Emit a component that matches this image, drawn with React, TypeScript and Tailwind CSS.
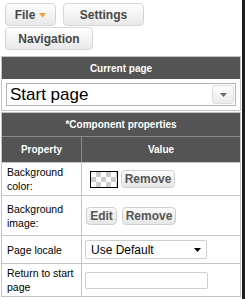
import React from "react";

const font = "font-['Liberation_Sans',Arial,sans-serif]";

function ToolButton({ children, className = "" }: { children: React.ReactNode; className?: string }) {
  return (
    <div
      className={`flex h-[23px] items-center justify-center rounded-[4px] border border-[#d6d6d6] bg-gradient-to-b from-[#ffffff] to-[#e8e8e8] text-[12px] font-bold text-[#474747] ${className}`}
    >
      {children}
    </div>
  );
}

function SmallButton({ children, className = "" }: { children: React.ReactNode; className?: string }) {
  return (
    <div
      className={`flex h-[18px] items-center justify-center rounded-[4px] border border-[#d0d0d0] bg-gradient-to-b from-[#fbfbfb] to-[#e6e6e6] text-[12px] font-bold text-[#555555] ${className}`}
    >
      {children}
    </div>
  );
}

export default function App() {
  return (
    <div className={`flex h-[299px] w-[245px] overflow-hidden bg-white ${font}`}>
      <div className="flex w-[242px] flex-col">
        {/* Toolbar */}
        <div className="flex w-[150px] flex-wrap gap-x-[7px] gap-y-px pl-[5px] pt-[3px]">
          <ToolButton className="w-[51px] gap-[4px]">
            <span>File</span>
            <svg width="7" height="5" viewBox="0 0 7 5" className="mt-px">
              <path d="M0 0 L7 0 L3.5 4.5 Z" fill="#f0a030" />
            </svg>
          </ToolButton>
          <ToolButton className="w-[81px]">Settings</ToolButton>
          <ToolButton className="w-[88px]">Navigation</ToolButton>
        </div>

        {/* Current page table */}
        <div className="mx-px mt-[6px] border border-[#c4c4c4]">
          <div className="flex h-[22px] items-center justify-center bg-[#545454] text-[10px] font-bold text-white">
            Current page
          </div>
          <div className="flex h-[31px] items-center px-[4px]">
            <div className="flex h-[23px] w-full items-center border border-[#b4b4b4] bg-white pl-[3px] pr-px">
              <span className="flex-1 text-[17px] leading-none text-black">Start page</span>
              <div className="flex h-[19px] w-[22px] items-center justify-center rounded-[3px] border border-[#dcdcdc] bg-gradient-to-b from-[#fdfdfd] to-[#ececec]">
                <svg width="7" height="4" viewBox="0 0 7 4">
                  <path d="M0 0 L7 0 L3.5 4 Z" fill="#6a6a6a" />
                </svg>
              </div>
            </div>
          </div>
        </div>

        {/* Component properties table */}
        <div className="mx-px mt-px border border-[#c4c4c4]">
          <div className="flex h-[24px] items-center justify-center border-b border-[#8a8a8a] bg-[#545454] text-[10px] font-bold text-white">
            *Component properties
          </div>
          <div className="grid h-[25px] grid-cols-[80px_1fr] bg-[#545454] text-[10px] font-bold text-white">
            <div className="flex items-center justify-center border-r border-[#8a8a8a]">Property</div>
            <div className="flex items-center justify-center">Value</div>
          </div>

          <div className="grid grid-cols-[80px_1fr] text-[10.5px] leading-[14px] text-black">
            {/* Background color */}
            <div className="flex h-[33px] items-center border-r border-t border-[#c4c4c4] px-[5px]">
              Background color:
            </div>
            <div className="flex h-[33px] items-center gap-[3px] border-t border-[#c4c4c4] pl-[8px]">
              <div className="h-[17px] w-[28px] border border-black bg-[repeating-conic-gradient(#cccccc_0%_25%,#ffffff_0%_50%)] bg-[length:10px_10px]" />
              <SmallButton className="w-[54px]">Remove</SmallButton>
            </div>

            {/* Background image */}
            <div className="flex h-[40px] items-center border-r border-t border-[#c4c4c4] px-[5px]">
              Background image:
            </div>
            <div className="flex h-[40px] items-center gap-[5px] border-t border-[#c4c4c4] pl-[4px]">
              <SmallButton className="w-[31px]">Edit</SmallButton>
              <SmallButton className="w-[54px]">Remove</SmallButton>
            </div>

            {/* Page locale */}
            <div className="flex h-[28px] items-center border-r border-t border-[#c4c4c4] px-[5px]">
              Page locale
            </div>
            <div className="flex h-[28px] items-center border-t border-[#c4c4c4] pl-[3px]">
              <div className="flex h-[19px] w-[122px] items-center rounded-[2px] border border-[#cfcfcf] bg-white pl-[5px] pr-[5px]">
                <span className="flex-1 text-[12px] text-black">Use Default</span>
                <svg width="7" height="4" viewBox="0 0 7 4">
                  <path d="M0 0 L7 0 L3.5 4 Z" fill="#000000" />
                </svg>
              </div>
            </div>

            {/* Return to start page */}
            <div className="flex h-[33px] items-center border-r border-t border-[#c4c4c4] px-[5px]">
              Return to start page
            </div>
            <div className="flex h-[33px] items-center border-t border-[#c4c4c4] pl-[3px]">
              <div className="h-[17px] w-[123px] rounded-[2px] border border-[#cfcfcf] bg-white" />
            </div>
          </div>
        </div>
      </div>
      <div className="w-[3px] bg-[#1e1e1e]" />
    </div>
  );
}
